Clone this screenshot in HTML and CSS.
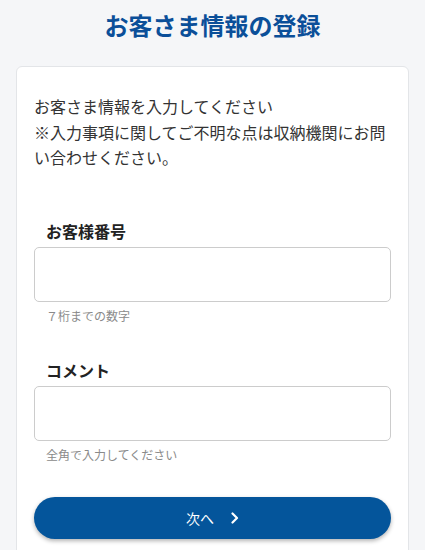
FILE: index.html
```html
<!DOCTYPE html>
<html lang="ja">
<head>
    <meta charset="UTF-8">
    <meta name="viewport" content="width=device-width, initial-scale=1.0">
    <title>お客さま情報の登録</title>
    <link rel="stylesheet" href="styles.css">
</head>
<body>
<header class="page-header">
    <h1>お客さま情報の登録</h1>
</header>

<main class="card">
    <p class="intro">お客さま情報を入力してください<br>※入力事項に関してご不明な点は収納機関にお問い合わせください。</p>

    <!-- Customer number -->
    <div class="field">
        <label for="customer-no">お客様番号</label>
        <input type="text" id="customer-no">
        <p class="hint">７桁までの数字</p>
    </div>

    <!-- Comment -->
    <div class="field">
        <label for="comment">コメント</label>
        <input type="text" id="comment">
        <p class="hint">全角で入力してください</p>
    </div>

    <button class="next-button" type="button">
        <span>次へ</span>
        <svg class="chevron" width="8" height="12" viewBox="0 0 8 12" aria-hidden="true">
            <path d="M1.5 1.5 L6 6 L1.5 10.5" fill="none" stroke="#fff" stroke-width="2.2" stroke-linecap="round" stroke-linejoin="round"/>
        </svg>
    </button>
</main>
</body>
</html>
```

FILE: styles.css
```css
body {
    margin: 0;
    font-family: "Noto Sans CJK JP", "Noto Sans", sans-serif;
    background-color: #f5f6f8;
    color: #333;
}

/* Page title */
.page-header {
    padding: 7px 0 23px;
    text-align: center;
}

.page-header h1 {
    margin: 0;
    font-size: 24px;
    line-height: 36px;
    font-weight: 700;
    color: #0b4f99;
}

/* White card holding the form */
.card {
    margin: 0 16px;
    padding: 27px 17px 40px;
    background-color: #fff;
    border: 1px solid #e3e5e8;
    border-radius: 6px;
}

.intro {
    margin: 0;
    font-size: 16px;
    line-height: 25.6px;
    color: #333;
}

/* Form fields */
.field {
    margin-top: 33px;
}

.intro + .field {
    margin-top: 48px;
}

.field label {
    display: block;
    padding-left: 12px;
    margin-bottom: 4px;
    font-size: 16px;
    line-height: 24px;
    font-weight: 700;
    color: #222;
}

.field input {
    display: block;
    box-sizing: border-box;
    width: 100%;
    height: 55px;
    padding: 0 12px;
    border: 1px solid #ccc;
    border-radius: 5px;
    font-size: 16px;
    font-family: inherit;
    outline: none;
}

.hint {
    margin: 5px 0 0;
    padding-left: 12px;
    font-size: 12px;
    line-height: 18px;
    color: #8a8a8a;
}

/* Submit button */
.next-button {
    display: flex;
    align-items: center;
    justify-content: center;
    gap: 17px;
    width: 100%;
    height: 42px;
    margin-top: 33px;
    border: none;
    border-radius: 21px;
    background-color: #04559b;
    color: #fff;
    font-family: inherit;
    font-size: 14px;
    box-shadow: 0 2px 4px rgba(0, 0, 0, 0.3);
    cursor: pointer;
}

.chevron {
    display: block;
}
```
